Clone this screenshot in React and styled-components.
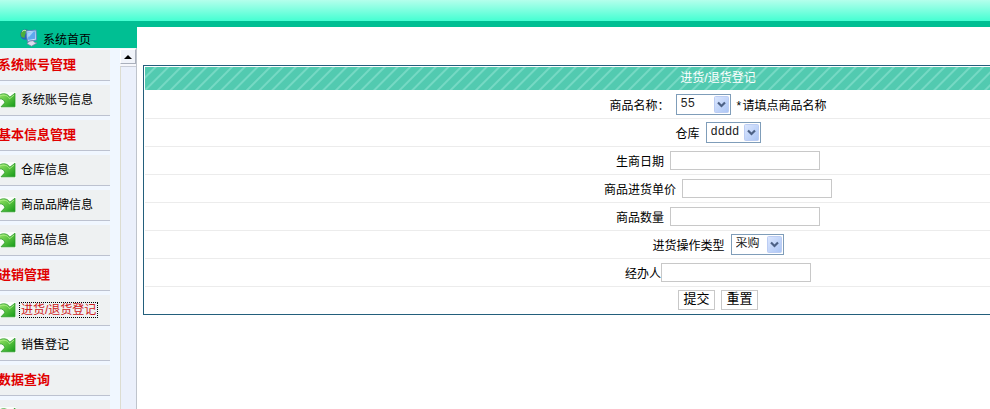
import { useState } from "react";
import styled, { createGlobalStyle } from "styled-components";

const GlobalStyle = createGlobalStyle`
    * {
        box-sizing: border-box;
    }
    body {
        margin: 0;
        background: #fff;
        color: #000;
        font-family: "Liberation Sans", "Noto Sans CJK SC", sans-serif;
        font-size: 12px;
        overflow: hidden;
    }
`;

const Page = styled.div`
    display: flex;
    flex-direction: column;
    height: 100vh;
`;

const TopBar = styled.header`
    flex: none;
    height: 27px;
    background: linear-gradient(#b4ffec, #44ffd2);
    border-bottom: 6px solid #00bf93;
`;

const Body = styled.div`
    display: flex;
    flex: 1;
    min-height: 0;
`;

const Side = styled.aside`
    display: flex;
    flex-direction: column;
    flex: none;
    width: 137px;
    overflow: hidden;
`;

const HomeLink = styled.a`
    display: flex;
    flex: none;
    align-items: center;
    gap: 5px;
    height: 21px;
    padding-left: 20px;
    background: #00bf93;
    color: #000;
    text-decoration: none;
    line-height: 16px;
    & span {
        padding-top: 4px;
    }
`;

const SideBody = styled.div`
    display: flex;
    flex: 1;
    justify-content: space-between;
    min-height: 0;
    background: #f0f7ff;
    border-right: 1px solid #bfc4cc;
`;

const Menu = styled.nav`
    width: 110px;
    padding-top: 2px;
    overflow: hidden;
`;

const MenuRow = styled.div`
    display: flex;
    align-items: center;
    height: 31px;
    margin-bottom: 4px;
    background: #eef1f2;
    border-bottom: 1px solid #bcc2d0;
    white-space: nowrap;
`;

const MenuTitle = styled(MenuRow)`
    padding-bottom: 3px;
    margin-left: -2px;
    color: #e00000;
    font-size: 13px;
    font-weight: bold;
`;

const MenuLink = styled.a`
    margin-left: 4px;
    padding: 0 1px;
    line-height: 14px;
    color: ${(props) => (props.$active ? "#d02020" : "#000")};
    outline: ${(props) => (props.$active ? "1px dotted #000" : "none")};
    text-decoration: none;
`;

const ScrollBar = styled.div`
    display: flex;
    flex-direction: column;
    gap: 2px;
    width: 16px;
    padding-top: 1px;
    background: #f6f7fb;
`;

const ScrollUp = styled.button`
    display: flex;
    align-items: center;
    justify-content: center;
    height: 15px;
    padding: 0;
    background: #f1f4fa;
    border: 1px solid #fff;
    border-right-color: #aab0bc;
    border-bottom-color: #aab0bc;
`;

const ScrollThumb = styled.div`
    flex: 1;
    background: #ebf0fb;
    border-top: 1px solid #c8ccd6;
    border-left: 1px solid #dcdcd0;
`;

const Main = styled.main`
    flex: 1;
    min-width: 0;
    padding: 38px 0 0 6px;
    overflow: hidden;
`;

const Form = styled.form`
    min-width: 1150px;
    padding: 1px;
    border: 1px solid #235f7c;
`;

const FormTitle = styled.h1`
    height: 23px;
    margin: 0 0 1px;
    background: repeating-linear-gradient(135deg, #52cab0 0, #52cab0 6px, #76d9c4 7px, #76d9c4 8px, #52cab0 9px);
    color: #fff;
    font-size: 12px;
    font-weight: normal;
    line-height: 23px;
    text-align: center;
`;

const Row = styled.div`
    display: flex;
    align-items: center;
    justify-content: center;
    gap: ${(props) => (props.$tight ? "0" : "6px")};
    height: 28px;
    border-bottom: 1px solid #ececec;
    &:last-child {
        border-bottom: none;
        height: 26px;
    }
`;

const Label = styled.label`
    padding-top: 3px;
    line-height: 16px;
`;

const Note = styled.span`
    padding-top: 3px;
    line-height: 16px;
    & b {
        display: inline-block;
        width: 6px;
        font-weight: normal;
    }
`;

const TextInput = styled.input`
    width: 150px;
    height: 19px;
    padding: 0 2px;
    border: 1px solid #c8c8c8;
    font: inherit;
`;

const SelectBox = styled.span`
    position: relative;
    width: ${(props) => props.$width}px;
    height: 21px;
    & svg {
        position: absolute;
        top: 2px;
        right: 2px;
        pointer-events: none;
    }
`;

const Select = styled.select`
    display: block;
    width: 100%;
    height: 100%;
    padding: 0 0 1px 4px;
    appearance: none;
    background: #fff;
    border: 1px solid #7f9db9;
    border-radius: 0;
    color: #222;
    font-family: "Liberation Mono", "Noto Sans CJK SC", monospace;
    font-size: 12px;
`;

const Button = styled.button`
    width: 37px;
    height: 20px;
    padding: 0 0 2px;
    background: #fff;
    border: 1px solid #c8c8c8;
    color: #000;
    font: inherit;
    font-size: 13px;
    line-height: 16px;
`;

const ComputerIcon = () => (
    <svg width="18" height="18" viewBox="0 0 18 18" aria-hidden="true">
        <circle cx="5.5" cy="5.5" r="5.3" fill="#2468b8" />
        <path d="M.5 5C1.500 1 5 0 7.500 1L6 4 5 6 4.500 9 1.500 8Z" fill="#4caf3c" />
        <path d="M2 2.500Q4 .5 6 1.500" stroke="#c5ecb0" fill="none" />
        <path d="M6 2 16 1 16.500 11 7.500 12.500Z" fill="#d3e5fa" stroke="#5c83c4" />
        <path d="M7.200 3.200 15 2.300 15.300 9.800 8.300 11Z" fill="#5fa8ee" />
        <path d="M7.500 3.500 13.500 2.800 8.500 8.500Z" fill="#a4d4fb" />
        <path d="M9 12.300 13 11.600 14.500 13.300 17 14 11.500 17.200 7 14.800Z" fill="#dcdcee" stroke="#7478a4" strokeWidth=".7" />
    </svg>
);

const ArrowIcon = () => (
    <svg width="16" height="16" viewBox="0 0 16 16" aria-hidden="true">
        <defs>
            <linearGradient id="leaf" x1="0" y1="0" x2="1" y2="1">
                <stop offset="0" stopColor="#9be868" />
                <stop offset="1" stopColor="#159a18" />
            </linearGradient>
        </defs>
        <rect width="16" height="16" fill="#fafdf9" />
        <path
            d="M-1 3.200C3 .8 7.500 1.500 9.800 5.200L15 1.200V14.800H1L4.800 10.800C4.500 8.200 2.500 6.500 -1 6.800Z"
            fill="url(#leaf)"
            stroke="#2c9a2c"
            strokeWidth=".8"
        />
        <path d="M0 4C3.500 2.300 7.500 3 9.500 6.800L14 3.200" stroke="#b8f090" strokeWidth=".8" fill="none" />
    </svg>
);

const DropArrow = () => (
    <svg width="15" height="17" viewBox="0 0 15 17" aria-hidden="true">
        <defs>
            <linearGradient id="drop" x1="0" y1="0" x2="1" y2="1">
                <stop offset="0" stopColor="#dce7fe" />
                <stop offset="1" stopColor="#abc5f5" />
            </linearGradient>
        </defs>
        <rect x=".5" y=".5" width="14" height="16" rx="1" fill="url(#drop)" stroke="#bccdf3" />
        <path d="M4 6.500 7.500 10 11 6.500" stroke="#4d6185" strokeWidth="2.2" fill="none" />
    </svg>
);

const menu = [
    { title: "系统账号管理", items: ["系统账号信息"] },
    { title: "基本信息管理", items: ["仓库信息", "商品品牌信息", "商品信息"] },
    { title: "进销管理", items: ["进货/退货登记", "销售登记"] },
    { title: "数据查询", items: [""] },
];

const SelectField = ({ id, width, options }) => (
    <SelectBox $width={width}>
        <Select id={id}>
            {options.map((option) => (
                <option key={option}>{option}</option>
            ))}
        </Select>
        <DropArrow />
    </SelectBox>
);

const SideMenu = () => {
    const [active, setActive] = useState("进货/退货登记");

    return (
        <Menu>
            {menu.map((group) => (
                <div key={group.title}>
                    <MenuTitle>{group.title}</MenuTitle>
                    {group.items.map((item) => (
                        <MenuRow key={item}>
                            <ArrowIcon />
                            {item && (
                                <MenuLink href="#" $active={item === active} onClick={() => setActive(item)}>
                                    {item}
                                </MenuLink>
                            )}
                        </MenuRow>
                    ))}
                </div>
            ))}
        </Menu>
    );
};

const StockForm = () => (
    <Form onSubmit={(e) => e.preventDefault()}>
        <FormTitle>进货/退货登记</FormTitle>
        <Row>
            <Label htmlFor="goods">商品名称：</Label>
            <SelectField id="goods" width={55} options={["55"]} />
            <Note><b>*</b>请填点商品名称</Note>
        </Row>
        <Row>
            <Label htmlFor="store">仓库</Label>
            <SelectField id="store" width={55} options={["dddd"]} />
        </Row>
        <Row>
            <Label htmlFor="date">生商日期</Label>
            <TextInput id="date" />
        </Row>
        <Row>
            <Label htmlFor="price">商品进货单价</Label>
            <TextInput id="price" />
        </Row>
        <Row>
            <Label htmlFor="count">商品数量</Label>
            <TextInput id="count" />
        </Row>
        <Row>
            <Label htmlFor="type">进货操作类型</Label>
            <SelectField id="type" width={53} options={["采购"]} />
        </Row>
        <Row $tight>
            <Label htmlFor="person">经办人</Label>
            <TextInput id="person" />
        </Row>
        <Row>
            <Button type="submit">提交</Button>
            <Button type="reset">重置</Button>
        </Row>
    </Form>
);

const App = () => {
    return (
        <Page>
            <GlobalStyle />
            <TopBar />
            <Body>
                <Side>
                    <HomeLink href="#">
                        <ComputerIcon />
                        <span>系统首页</span>
                    </HomeLink>
                    <SideBody>
                        <SideMenu />
                        <ScrollBar>
                            <ScrollUp type="button" aria-label="向上">
                                <svg width="8" height="4" viewBox="0 0 8 4">
                                    <path d="M0 4 4 0 8 4Z" fill="#000" />
                                </svg>
                            </ScrollUp>
                            <ScrollThumb />
                        </ScrollBar>
                    </SideBody>
                </Side>
                <Main>
                    <StockForm />
                </Main>
            </Body>
        </Page>
    );
};

export default App;
